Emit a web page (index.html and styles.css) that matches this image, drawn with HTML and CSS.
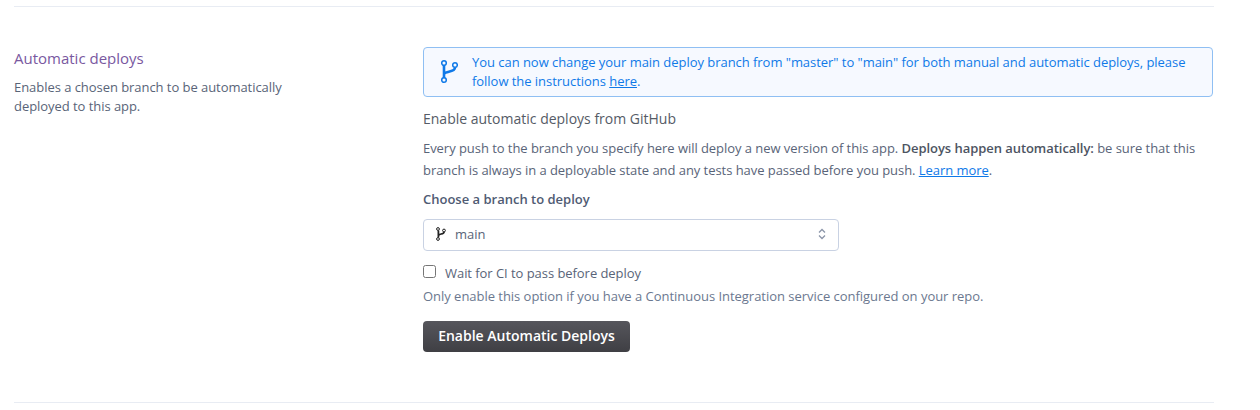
FILE: index.html
```html
<!DOCTYPE html>
<html lang="en">
<head>
<meta charset="utf-8">
<title>Automatic deploys</title>
<link rel="stylesheet" href="styles.css">
</head>
<body>
<section class="section">
  <div class="intro">
    <h2 class="title">Automatic deploys</h2>
    <p class="lede">Enables a chosen branch to be automatically deployed to this app.</p>
  </div>
  <div class="main">
    <div class="notice">
      <svg class="notice-icon" viewBox="0 0 18 26" width="18" height="26" aria-hidden="true">
        <circle cx="4" cy="4" r="2.3" fill="none" stroke="currentColor" stroke-width="1.5"/>
        <circle cx="15" cy="6" r="2.3" fill="none" stroke="currentColor" stroke-width="1.5"/>
        <circle cx="4" cy="21" r="2.3" fill="none" stroke="currentColor" stroke-width="1.5"/>
        <path d="M4 6V19M4 15.5C4 11.5 15 14 15 8.5" fill="none" stroke="currentColor" stroke-width="2.6"/>
      </svg>
      <p class="notice-text">You can now change your main deploy branch from "master" to "main" for both manual and automatic deploys, please follow the instructions <a class="link" href="#">here</a>.</p>
    </div>
    <h3 class="subtitle">Enable automatic deploys from GitHub</h3>
    <p class="body-text">Every push to the branch you specify here will deploy a new version of this app. <strong class="strong">Deploys happen automatically:</strong> be sure that this branch is always in a deployable state and any tests have passed before you push. <a class="link" href="#">Learn more</a>.</p>
    <div class="label">Choose a branch to deploy</div>
    <div class="select">
      <svg class="branch-icon" viewBox="0 0 10 14" width="10" height="14" aria-hidden="true">
        <circle cx="2" cy="2" r="1.4" fill="none" stroke="currentColor" stroke-width="1"/>
        <circle cx="8" cy="3.5" r="1.4" fill="none" stroke="currentColor" stroke-width="1"/>
        <circle cx="2" cy="12" r="1.4" fill="none" stroke="currentColor" stroke-width="1"/>
        <path d="M2.4 3.4V10.6M2.4 9C2.4 6.4 8 7.6 8 4.9" fill="none" stroke="currentColor" stroke-width="1.8"/>
      </svg>
      <span class="select-value">main</span>
      <svg class="chevrons" viewBox="0 0 8 12" width="8" height="12" aria-hidden="true">
        <path d="M1 4.5L4 1.5L7 4.5M1 7.5L4 10.5L7 7.5" fill="none" stroke="currentColor" stroke-width="1.3"/>
      </svg>
    </div>
    <label class="check-row"><input class="checkbox" type="checkbox"><span>Wait for CI to pass before deploy</span></label>
    <p class="hint">Only enable this option if you have a Continuous Integration service configured on your repo.</p>
    <button class="button" type="button">Enable Automatic Deploys</button>
  </div>
</section>
</body>
</html>
```

FILE: styles.css
```css
* { box-sizing: border-box; }
html, body { margin: 0; padding: 0; background: #fff; }
body {
  padding: 6px 46px 0 14px;
  font-family: "Open Sans", "Noto Sans", sans-serif;
  font-size: 13px;
  line-height: 22px;
  letter-spacing: -0.05px;
  color: #596478;
}
.section {
  display: flex;
  height: 397px;
  border-top: 1px solid #e8ecf3;
  border-bottom: 1px solid #e8ecf3;
  padding-top: 40px;
}
.intro { width: 409px; flex: none; }
.title { margin: 0; font-size: 15px; font-weight: 400; line-height: 22px; letter-spacing: 0; color: #79589f; }
.lede { margin: 9px 0 0; width: 290px; line-height: 19px; }
.main { flex: 1; min-width: 0; padding-right: 1px; }
.notice {
  display: flex;
  align-items: center;
  height: 50px;
  padding: 0 12px 0 16px;
  border: 1px solid #8fbff3;
  border-radius: 4px;
  background: #f6f9ff;
  color: #0f79e8;
}
.notice-icon { flex: none; margin-right: 14px; }
.notice-text { margin: 0; line-height: 19px; letter-spacing: -0.04px; }
.link { color: inherit; text-decoration: underline; }
.body-text .link { color: #0f79e8; }
.subtitle { margin: 11px 0 0; font-size: 14px; font-weight: 400; line-height: 22px; letter-spacing: 0; color: #555b66; }
.body-text { margin: 7px 0 0; }
.strong { font-weight: 600; color: #4d5462; }
.label { margin-top: 7px; font-weight: 600; letter-spacing: 0; color: #4f5b73; }
.select {
  display: flex;
  align-items: center;
  width: 416px;
  height: 32px;
  margin-top: 9px;
  padding: 0 12px 2px;
  border: 1px solid #c9d2e3;
  border-radius: 4px;
  color: #596478;
}
.branch-icon { flex: none; color: #222; }
.select-value { margin-left: 9px; flex: 1; }
.chevrons { flex: none; color: #8b95a8; }
.check-row { display: flex; align-items: center; margin-top: 11px; height: 22px; }
.checkbox { width: 13px; height: 13px; margin: 0 9px 4px 0; }
.hint { margin: 1px 0 0; letter-spacing: -0.03px; color: #6b788f; }
.button {
  display: block;
  width: 207px;
  height: 31px;
  margin-top: 14px;
  padding: 0 0 2px;
  border: 0;
  border-radius: 4px;
  background: linear-gradient(#56565c, #3f3f44);
  color: #fff;
  font: 600 14px/29px "Open Sans", "Noto Sans", sans-serif;
}
```
